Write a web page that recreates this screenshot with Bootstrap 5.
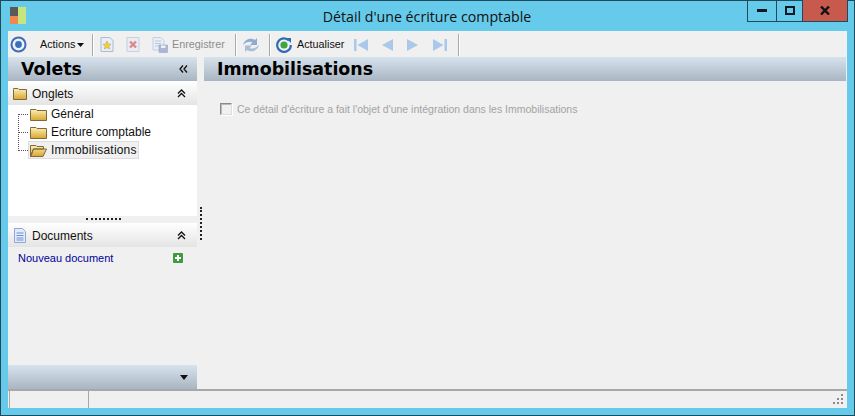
<!DOCTYPE html>
<html lang="fr"><head><meta charset="utf-8"><title>Détail d'une écriture comptable</title>
<link href="https://cdn.jsdelivr.net/npm/bootstrap@5.3.0/dist/css/bootstrap.min.css" rel="stylesheet">
<style>
html,body{height:416px;overflow:hidden;margin:0}
body{font-family:"Liberation Sans",sans-serif;font-size:11px;color:#111;background:#66cbea}
svg{display:block;flex:none}
.win{width:855px;height:416px;border:1px solid #1f4a5c;background:#66cbea}
.titlebar{height:30px;position:relative;padding:6px 0 0 9px}
.wintitle{position:absolute;left:0;right:0;top:6px;text-align:center;font-family:"Open Sans",sans-serif;font-size:14.2px;line-height:19px;color:#111;padding-right:1px}
.winbtns{position:absolute;right:6px;top:-1px;height:22px;border:1px solid #1f4a5c;border-top:0}
.wbtn{height:21px;width:29px;border-right:1px solid #1f4a5c}
.wbtn.mbtn{width:26px}
.wbtn.xbtn{width:44px;border-right:0;background:#c75a4d}
.inner{width:839px;height:377px;margin-left:7px;background:#f0f0f0}
.toolbar{height:26px;padding-top:1px;font-size:10.8px}
.tsep{width:1px;height:22px;background:#a9a9a9;box-shadow:1px 0 #fff}
.dim{color:#8c8c8c}
.panes{height:332px}
.leftcol{width:189px}
.grad{background:linear-gradient(#d6e2ec,#a9b5c2)}
.h24{height:24px}
.bighead{font-family:"DejaVu Sans",sans-serif;font-weight:700;font-size:17.4px;color:#000}
.sechead{background:linear-gradient(#fff,#e4e4e4);font-size:12px;height:24px}
.sechead span{padding-top:1px}
.treebox{height:111px;background:#fff;padding:0 0 0 10px}
.vline{border-left:1px dotted #555;width:1px;height:37px;margin-top:9px;flex:none}
.twig{border-top:1px dotted #555;width:9px;flex:none}
.trow{height:18px;font-size:12px;line-height:18px}
.foldertree{margin-left:2px}
.tsel{background:#f0f0f0;border:1px solid #dcdcdc;padding:0 3px 0 1px;height:18px;width:111px}
.splith{height:7px;background:#f0f0f0;position:relative}
.dotsh{width:35px;border-top:2px dotted #222;margin:0 auto;position:relative;top:2px;left:1px}
.docbody{height:118px;padding:4px 14px 0 10px}
.doclink{color:#00009c;font-size:11px;text-decoration:none;line-height:14px}
.splitv{width:7px;position:relative}
.dotsv{position:absolute;left:3px;top:150px;height:33px;border-left:2px dotted #222}
.rightcol{width:642px}
.chkline{padding:20px 0 0 16px;color:#a3a3a3;font-size:10.5px;line-height:16px}
.fakechk{width:12px;height:12px;border:1px solid #8a8a8a;border-right-color:#ddd;border-bottom-color:#ddd;background:#f0f0f0;box-shadow:inset 1px 1px #bbb,1px 1px #fff}
.statusbar{height:19px;border-top:2px solid #a8a8a8;position:relative}
.scell{height:17px;border-left:1px solid #a8a8a8;margin-left:1px}
</style></head><body>
<div class="win">
 <div class="titlebar">
  <svg width="17" height="18" viewBox="0 0 17 18"><rect width="8" height="9" fill="#5a5a5a"/><rect x="8" width="8" height="17" fill="#c6e57f"/><rect y="9" width="8" height="8" fill="#f0874f"/></svg>
  <div class="wintitle">Détail d'une écriture comptable</div>
  <div class="winbtns d-flex">
   <div class="wbtn d-flex align-items-center justify-content-center"><svg width="10" height="3" viewBox="0 0 10 3"><rect width="10" height="3" fill="#0b1a22"/></svg></div>
   <div class="wbtn mbtn d-flex align-items-center justify-content-center"><svg width="10" height="9" viewBox="0 0 10 9"><rect x="1" y="1" width="8" height="7" fill="none" stroke="#0b1a22" stroke-width="2"/></svg></div>
   <div class="wbtn xbtn d-flex align-items-center justify-content-center"><svg width="10" height="9" viewBox="0 0 10 9"><path d="M1 0.5L9 8.5M9 0.5L1 8.5" stroke="#111" stroke-width="2.4"/></svg></div>
  </div>
 </div>
 <div class="inner">
  <div class="toolbar d-flex align-items-center">
   <svg style="margin-left:2px" width="17" height="17" viewBox="0 0 17 17"><circle cx="8.5" cy="8.5" r="7" fill="#eef3fb" stroke="#3c6fb8" stroke-width="2"/><circle cx="8.5" cy="8.5" r="3.4" fill="#3c6fb8"/></svg>
   <span style="margin-left:13px;width:36px">Actions</span>
   <svg style="margin-left:1px" width="7" height="4" viewBox="0 0 7 4"><path d="M0 0H7L3.5 4Z" fill="#111"/></svg>
   <span class="tsep" style="margin-left:8px"></span>
   <svg style="margin-left:7px" width="14" height="15" viewBox="0 0 14 15"><path d="M1 .5H10L13 3.5V14.5H1Z" fill="#e5eefa" stroke="#a8bcd8"/><path d="M7 4L8.3 7 11 7.3 9 9.3 9.6 12 7 10.6 4.4 12 5 9.3 3 7.3 5.7 7Z" fill="#f4cf3c" stroke="#c79a1e" stroke-width=".5"/></svg>
   <svg style="margin-left:12px" width="14" height="15" viewBox="0 0 14 15"><path d="M1 .5H13V14.5H1Z" fill="#e9ecf3" stroke="#c8d0dd"/><path d="M4 4.5L10 10.5M10 4.5L4 10.5" stroke="#d88a8a" stroke-width="2.4"/></svg>
   <svg style="margin-left:12px" width="16" height="16" viewBox="0 0 16 16"><path d="M1 .5H9L12 3.5V13H1Z" fill="#e8eef6" stroke="#c3cfe0"/><path d="M3 4H9M3 6.5H9M3 9H9" stroke="#bcc8da"/><rect x="7" y="8" width="8.5" height="7.5" fill="#a9b6d4" stroke="#8e9cc0" stroke-width=".5"/><rect x="9" y="8.5" width="4.5" height="2.5" fill="#eef2f8"/></svg>
   <span class="dim" style="margin-left:4px;width:53px">Enregistrer</span>
   <span class="tsep" style="margin-left:10px"></span>
   <svg style="margin-left:6px" width="18" height="16" viewBox="0 0 18 16"><path d="M1 8C2 3 8 0 13 3L15 1V8H8L10.500 5.500C7.500 4 4 5 1 8Z" fill="#8fabcf"/><path d="M17 8C16 13 10 16 5 13L3 15V8.500H10L7.500 11C10.500 12.500 14 11 17 8Z" fill="#a9bdd7"/></svg>
   <span class="tsep" style="margin-left:9px"></span>
   <svg style="margin-left:6px" width="16" height="16" viewBox="0 0 16 16"><path d="M13 3.500A6.800 6.800 0 1 0 14.800 8" fill="none" stroke="#2f6cb5" stroke-width="2.200"/><path d="M10 1L15 1V6Z" fill="#2f6cb5"/><circle cx="8" cy="8" r="3.600" fill="#3fa63f"/></svg>
   <span style="margin-left:5px;width:47px">Actualiser</span>
   <svg style="margin-left:10px" width="15" height="14" viewBox="0 0 15 14"><rect x="0" y="1" width="2.500" height="12" fill="#a9c8ea"/><path d="M14 1V13L3.500 7Z" fill="#a9c8ea"/></svg>
   <svg style="margin-left:12px" width="13" height="14" viewBox="0 0 13 14"><path d="M12 1V13L1 7Z" fill="#a9c8ea"/></svg>
   <svg style="margin-left:12px" width="13" height="14" viewBox="0 0 13 14"><path d="M1 1V13L12 7Z" fill="#a9c8ea"/></svg>
   <svg style="margin-left:13px" width="15" height="14" viewBox="0 0 15 14"><rect x="12.500" y="1" width="2.500" height="12" fill="#a9c8ea"/><path d="M1 1V13L11.500 7Z" fill="#a9c8ea"/></svg>
   <span class="tsep" style="margin-left:11px"></span>
  </div>
  <div class="panes d-flex">
   <div class="leftcol">
    <div class="grad h24 bighead d-flex align-items-center justify-content-between" style="padding:0 9px 0 13px">Volets
     <svg width="9" height="8" viewBox="0 0 9 8"><path d="M4 .5L1 4 4 7.500M8 .5L5 4 8 7.500" fill="none" stroke="#111" stroke-width="1.300"/></svg></div>
    <div class="sechead d-flex align-items-center" style="padding:0 11px 0 5px">
     <svg width="14" height="13" viewBox="0 0 14 13"><defs><linearGradient id="fg" x1="0" y1="0" x2="0" y2="1"><stop offset="0" stop-color="#fdf0b4"/><stop offset="1" stop-color="#d9a42f"/></linearGradient></defs><path d="M.5 2.500V1.500H5L6 2.500H13.500V12.500H.5Z" fill="url(#fg)" stroke="#7d6a3a"/></svg>
     <span class="flex-grow-1" style="margin-left:5px">Onglets</span>
     <svg width="9" height="9" viewBox="0 0 9 9"><path d="M1 4.500L4.500 1 8 4.500M1 8L4.500 4.500 8 8" fill="none" stroke="#111" stroke-width="1.300"/></svg>
    </div>
    <div class="treebox d-flex">
     <div class="vline"></div>
     <div>
      <div class="trow d-flex align-items-center"><span class="twig"></span><svg class="foldertree" width="17" height="13" viewBox="0 0 17 13"><path d="M.5 2.500V1.500H6L7 2.500H16.500V12.500H.5Z" fill="url(#fg)" stroke="#7d6a3a"/></svg><span style="margin-left:4px">Général</span></div>
      <div class="trow d-flex align-items-center"><span class="twig"></span><svg class="foldertree" width="17" height="13" viewBox="0 0 17 13"><path d="M.5 2.500V1.500H6L7 2.500H16.500V12.500H.5Z" fill="url(#fg)" stroke="#7d6a3a"/></svg><span style="margin-left:4px">Ecriture comptable</span></div>
      <div class="trow d-flex align-items-center"><span class="twig"></span><div class="tsel d-flex align-items-center"><svg width="17" height="13" viewBox="0 0 17 13"><path d="M.5 12.500V1.500H6L7 2.500H13.500V5H3.500L.5 12.500ZM.5 12.500H13L16.500 5H3.500Z" fill="url(#fg)" stroke="#7d6a3a" stroke-linejoin="round"/></svg><span style="margin-left:4px;line-height:16px;letter-spacing:.2px">Immobilisations</span></div></div>
     </div>
    </div>
    <div class="splith"><div class="dotsh"></div></div>
    <div class="sechead d-flex align-items-center" style="padding:0 11px 0 5px">
     <svg width="14" height="15" viewBox="0 0 14 15"><path d="M1.500 .5H9.500L12.500 3.500V14.500H1.500Z" fill="#e3ebfa" stroke="#8fa6d6"/><path d="M3.500 5H10.500M3.500 7.500H10.500M3.500 10H10.500M3.500 12H10.500" stroke="#6f8fd0"/></svg>
     <span class="flex-grow-1" style="margin-left:5px">Documents</span>
     <svg width="9" height="9" viewBox="0 0 9 9"><path d="M1 4.500L4.500 1 8 4.500M1 8L4.500 4.500 8 8" fill="none" stroke="#111" stroke-width="1.300"/></svg>
    </div>
    <div class="docbody d-flex justify-content-between">
     <a class="doclink" href="#">Nouveau document</a>
     <svg style="margin-top:2px" width="10" height="10" viewBox="0 0 10 10"><rect width="10" height="10" rx="1" fill="#3e9a3e"/><path d="M5 2V8M2 5H8" stroke="#fff" stroke-width="2"/></svg>
    </div>
    <div class="grad h24 d-flex align-items-center justify-content-end" style="padding-right:9px"><svg width="8" height="5" viewBox="0 0 8 5"><path d="M0 0H8L4 5Z" fill="#111"/></svg></div>
   </div>
   <div class="splitv"><div class="dotsv"></div></div>
   <div class="rightcol">
    <div class="grad h24 bighead" style="padding-left:13px;line-height:24px">Immobilisations</div>
    <div class="chkline d-flex align-items-center">
     <span class="fakechk"></span><span style="margin-left:5px">Ce détail d'écriture a fait l'objet d'une intégration dans les Immobilisations</span>
    </div>
   </div>
  </div>
  <div class="statusbar d-flex">
   <div class="scell" style="width:78px"></div>
   <div class="scell flex-grow-1"></div>
   <svg style="position:absolute;right:3px;bottom:3px" width="11" height="11" viewBox="0 0 11 11"><path d="M8 0h2v2H8zM4 4h2v2H4zM8 4h2v2H8zM0 8h2v2H0zM4 8h2v2H4zM8 8h2v2H8z" fill="#8a8a8a"/></svg>
  </div>
 </div>
</div>
</body></html>
